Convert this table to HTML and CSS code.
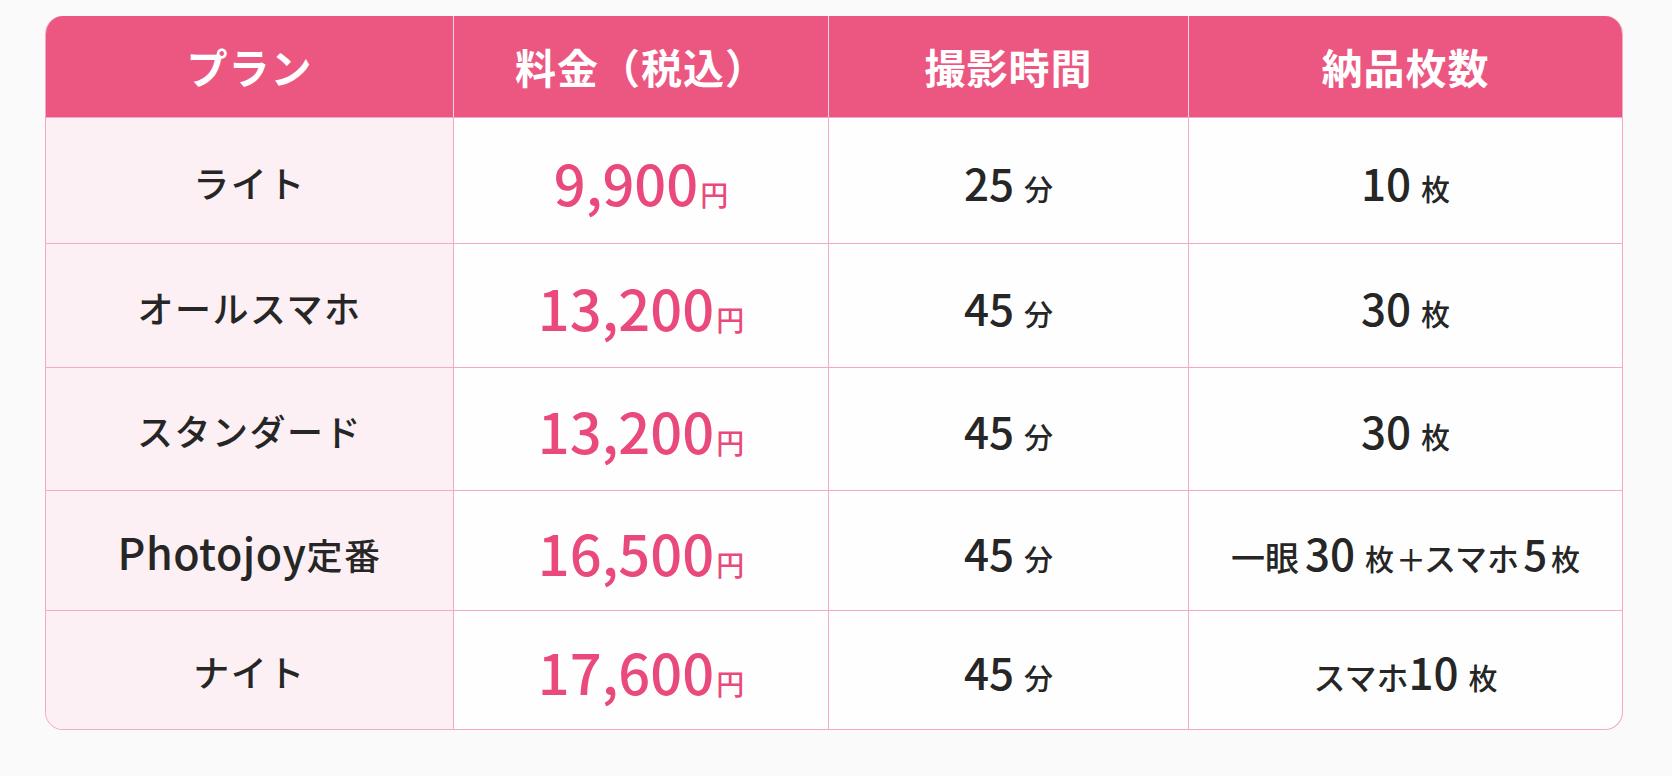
FILE: index.html
```html
<!DOCTYPE html>
<html lang="ja">
<head>
<meta charset="utf-8">
<title>料金プラン</title>
<link rel="stylesheet" href="styles.css">
</head>
<body>
<div class="page">
  <div class="table">
    <div class="th"><span class="th-text">プラン</span></div>
    <div class="th"><span class="th-text">料金（税込）</span></div>
    <div class="th"><span class="th-text">撮影時間</span></div>
    <div class="th last"><span class="th-text">納品枚数</span></div>

    <div class="td plan">ライト</div>
    <div class="td"><span class="price">9,900</span><span class="yen">円</span></div>
    <div class="td"><span class="num">25</span><span class="unit">分</span></div>
    <div class="td last"><span class="num">10</span><span class="unit">枚</span></div>

    <div class="td plan">オールスマホ</div>
    <div class="td"><span class="price">13,200</span><span class="yen">円</span></div>
    <div class="td"><span class="num">45</span><span class="unit">分</span></div>
    <div class="td last"><span class="num">30</span><span class="unit">枚</span></div>

    <div class="td plan">スタンダード</div>
    <div class="td"><span class="price">13,200</span><span class="yen">円</span></div>
    <div class="td"><span class="num">45</span><span class="unit">分</span></div>
    <div class="td last"><span class="num">30</span><span class="unit">枚</span></div>

    <div class="td plan"><span class="latin">Photojoy</span>定番</div>
    <div class="td"><span class="price">16,500</span><span class="yen">円</span></div>
    <div class="td"><span class="num">45</span><span class="unit">分</span></div>
    <div class="td last"><span class="kanji">一眼</span><span class="num">30</span><span class="unit">枚</span><span class="plus">＋</span><span class="kana">スマホ</span><span class="num small">5</span><span class="unit tight">枚</span></div>

    <div class="td plan">ナイト</div>
    <div class="td"><span class="price">17,600</span><span class="yen">円</span></div>
    <div class="td"><span class="num">45</span><span class="unit">分</span></div>
    <div class="td last"><span class="kana">スマホ</span><span class="num">10</span><span class="unit">枚</span></div>
  </div>
</div>
</body>
</html>
```

FILE: styles.css
```css
html, body {
  margin: 0;
  padding: 0;
  background: #fbfafa;
}

body {
  font-family: "Noto Sans CJK JP", "Noto Sans", sans-serif;
  color: #262626;
}

.page {
  padding: 16px 0 0 45px;
}

.table {
  display: grid;
  grid-template-columns: 408px 375px 360px 1fr;
  grid-template-rows: 101px 126px 124px 123px 120px 1fr;
  width: 1578px;
  height: 714px;
  box-sizing: border-box;
  border: 1.5px solid #f5a9c3;
  border-top: none;
  border-radius: 18px;
  overflow: hidden;
  background: #fefefe;
}

.th {
  background: #ec5781;
  display: flex;
  align-items: center;
  justify-content: center;
  border-right: 1px solid rgba(255, 255, 255, 0.75);
}

.th.last {
  border-right: none;
}

.th-text {
  color: #ffffff;
  font-size: 41px;
  font-weight: 700;
  letter-spacing: 1px;
  line-height: 1;
}

.td {
  display: flex;
  align-items: baseline;
  justify-content: center;
  align-content: center;
  flex-wrap: wrap;
  border-right: 1.5px solid #f5a9c3;
  border-top: 1.5px solid #f5a9c3;
  line-height: 1;
  padding-top: 2px;
}

.td.last {
  border-right: none;
}

.td.plan {
  background: #fdf0f4;
  font-size: 36px;
  font-weight: 500;
  letter-spacing: 1.5px;
}

.latin {
  font-size: 43px;
  letter-spacing: 0.5px;
}

.price {
  color: #e9497b;
  font-size: 56px;
  font-weight: 500;
}

.yen {
  color: #e9497b;
  font-size: 28px;
  font-weight: 500;
  margin-left: 2px;
}

.num {
  font-size: 44px;
  font-weight: 500;
}

.num.small {
  font-size: 42px;
  margin-left: 4px;
}

.unit {
  font-size: 29px;
  font-weight: 500;
  margin-left: 10px;
}

.unit.tight {
  margin-left: 4px;
}

.kanji {
  font-size: 34px;
  font-weight: 500;
  margin-right: 6px;
}

.kana {
  font-size: 32px;
  font-weight: 500;
}

.plus {
  font-size: 30px;
  font-weight: 500;
  margin: 0 -2px 0 2px;
}
```
